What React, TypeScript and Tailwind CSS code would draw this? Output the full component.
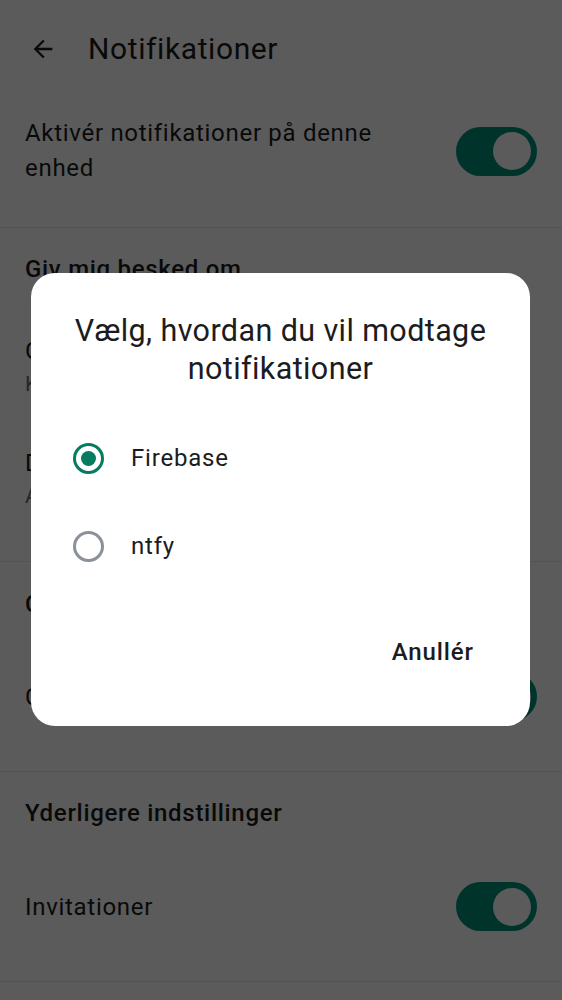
import React from "react";

function Toggle() {
  return (
    <div className="flex h-[49px] w-[81px] shrink-0 items-center justify-end rounded-full bg-[#00937a] pr-[6px]">
      <div className="h-[38px] w-[38px] rounded-full bg-white" />
    </div>
  );
}

function Radio({ checked }: { checked: boolean }) {
  return checked ? (
    <div className="flex h-[31px] w-[31px] shrink-0 items-center justify-center rounded-full border-[3px] border-[#047c5f]">
      <div className="h-[15px] w-[15px] rounded-full bg-[#047c5f]" />
    </div>
  ) : (
    <div className="h-[31px] w-[31px] shrink-0 rounded-full border-[3px] border-[#8b9199]" />
  );
}

export default function App() {
  return (
    <div
      className="relative h-[1000px] w-[562px] overflow-hidden bg-white text-[#1b1b1d]"
      style={{ fontFamily: "Roboto, 'Noto Sans', sans-serif" }}
    >
      {/* Header */}
      <div className="flex h-[98px] items-center pl-[29px]">
        <svg width="28" height="28" viewBox="0 0 24 24" className="shrink-0">
          <path d="M20 11H7.83l5.59-5.59L12 4l-8 8 8 8 1.41-1.41L7.83 13H20v-2z" fill="#1b1b1d" />
        </svg>
        <div className="ml-[31px] text-[30px] leading-[36px] tracking-[0.6px]">Notifikationer</div>
      </div>

      {/* Enable row */}
      <div className="flex items-center justify-between border-b border-[#e8e8e8] pb-[41px] pl-[25px] pr-[25px] pt-[18px]">
        <div className="w-[380px] text-[24px] leading-[35px] tracking-[0.7px]">
          Aktivér notifikationer på denne enhed
        </div>
        <Toggle />
      </div>

      {/* Notify me for */}
      <div className="border-b border-[#e8e8e8] pb-[25px] pl-[25px] pr-[25px] pt-[24px]">
        <div className="text-[24px] font-medium leading-[35px] tracking-[0.7px]">Giv mig besked om</div>
        <div className="mt-[25px] pb-[23px] pt-[22px]">
          <div className="text-[24px] leading-[34px] tracking-[0.7px]">Gruppechats</div>
          <div className="text-[21px] leading-[33px] tracking-[0.4px] text-[#666a70]">Kun omtaler og nøgleord</div>
        </div>
        <div className="pb-[23px] pt-[22px]">
          <div className="text-[24px] leading-[34px] tracking-[0.7px]">Direkte chats</div>
          <div className="text-[21px] leading-[33px] tracking-[0.4px] text-[#666a70]">Alle beskeder</div>
        </div>
      </div>

      {/* Mentions */}
      <div className="border-b border-[#e8e8e8] pl-[25px] pr-[25px] pt-[25px]">
        <div className="text-[24px] font-medium leading-[35px] tracking-[0.7px]">Chatrum</div>
        <div className="flex items-center justify-between pb-[50px] pt-[50px]">
          <div className="text-[24px] leading-[34px] tracking-[0.7px]">Chatrum-omtaler (@room)</div>
          <Toggle />
        </div>
      </div>

      {/* Additional settings */}
      <div className="border-b border-[#e8e8e8] pl-[25px] pr-[25px] pt-[24px]">
        <div className="text-[24px] font-medium leading-[35px] tracking-[0.7px]">Yderligere indstillinger</div>
        <div className="flex items-center justify-between pb-[50px] pt-[51px]">
          <div className="text-[24px] leading-[34px] tracking-[0.7px]">Invitationer</div>
          <Toggle />
        </div>
      </div>

      {/* Scrim */}
      <div className="absolute inset-0 bg-black/[0.643]" />

      {/* Dialog */}
      <div className="absolute left-[31px] top-[273px] flex h-[453px] w-[499px] flex-col rounded-[24px] bg-white">
        <div className="px-[24px] pt-[39px] text-center text-[30.5px] leading-[38px] tracking-[0.4px] text-[#1b1c1e]">
          Vælg, hvordan du vil modtage notifikationer
        </div>
        <div className="mt-[26px] flex flex-col">
          <div className="flex h-[88px] items-center pl-[42px]">
            <Radio checked />
            <div className="ml-[27px] text-[24px] tracking-[0.8px] text-[#1a1c1e]">Firebase</div>
          </div>
          <div className="flex h-[88px] items-center pl-[42px]">
            <Radio checked={false} />
            <div className="ml-[27px] text-[24px] tracking-[0.8px] text-[#1a1c1e]">ntfy</div>
          </div>
        </div>
        <div className="flex flex-1 items-center justify-end pr-[44px]">
          <div className="mt-[-12px] px-[12px] py-[12px] text-[24px] font-medium tracking-[0.9px] text-[#1b1c1e]">
            Anullér
          </div>
        </div>
      </div>
    </div>
  );
}
